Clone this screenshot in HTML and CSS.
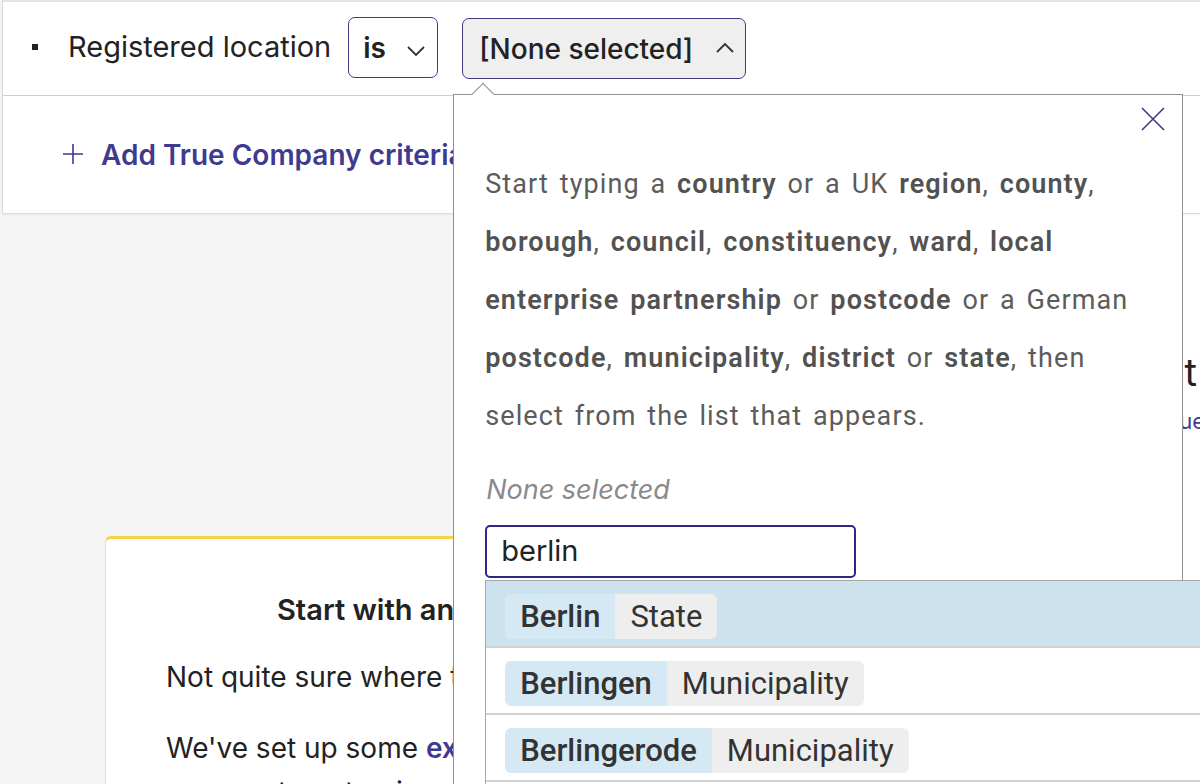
FILE: index.html
```html
<!DOCTYPE html>
<html lang="en">
<head>
<meta charset="utf-8">
<title>Registered location filter</title>
<link rel="stylesheet" href="styles.css">
</head>
<body>
<div class="page">
  <header class="criteria">
    <div class="row row-filter">
      <span class="bullet"></span>
      <span class="label">Registered location</span>
      <div class="select">
        <span>is</span>
        <svg class="chev" width="20" height="12" viewBox="0 0 20 12"><path d="M2 2 L10 10 L18 2" fill="none" stroke="#333" stroke-width="1.8"/></svg>
      </div>
      <div class="picker">
        <button class="picker-btn">
          <span>[None selected]</span>
          <svg class="chev" width="20" height="12" viewBox="0 0 20 12"><path d="M2 10 L10 2 L18 10" fill="none" stroke="#333" stroke-width="1.8"/></svg>
        </button>
        <div class="popover">
          <span class="arrow"></span>
          <button class="close" aria-label="Close">
            <svg width="24" height="24" viewBox="0 0 24 24"><path d="M1 1 L23 23 M23 1 L1 23" fill="none" stroke="#3d3a8c" stroke-width="1.6"/></svg>
          </button>
          <p class="hint">Start typing a <b>country</b> or a UK <b>region</b>, <b>county</b>, <b>borough</b>, <b>council</b>, <b>constituency</b>, <b>ward</b>, <b>local enterprise partnership</b> or <b>postcode</b> or a German <b>postcode</b>, <b>municipality</b>, <b>district</b> or <b>state</b>, then select from the list that appears.</p>
          <p class="none">None selected</p>
          <div class="search">
            <input class="input" type="text" value="berlin">
            <ul class="results">
              <li class="item active"><span class="chip"><span class="name">Berlin</span><span class="type">State</span></span></li>
              <li class="item"><span class="chip"><span class="name">Berlingen</span><span class="type">Municipality</span></span></li>
              <li class="item"><span class="chip"><span class="name">Berlingerode</span><span class="type">Municipality</span></span></li>
              <li class="item"><span class="chip"><span class="name">Berlinchen</span><span class="type">Municipality</span></span></li>
            </ul>
          </div>
        </div>
      </div>
    </div>
    <div class="row row-add">
      <span class="plus">
        <svg width="20" height="20" viewBox="0 0 20 20"><path d="M10 0 V20 M0 10 H20" fill="none" stroke="#3f3a8f" stroke-width="1.6"/></svg>
      </span>
      <a class="add-link" href="#">Add True Company criteria</a>
    </div>
  </header>
  <main class="main">
    <div class="left">
      <section class="card">
        <h3 class="card-title">Start with an example list</h3>
        <p class="card-text">Not quite sure where to start?</p>
        <p class="card-text">We've set up some <a href="#">example lists</a> that you can use to get going.</p>
      </section>
    </div>
    <div class="right">
      <h2 class="hero-title">Build your first list</h2>
      <a class="hero-link" href="#">Browse the catalogue</a>
    </div>
  </main>
</div>
</body>
</html>
```

FILE: styles.css
```css
* { box-sizing: border-box; }
html, body { margin: 0; padding: 0; }
body {
  width: 1200px;
  height: 784px;
  overflow: hidden;
  background: #f5f5f5;
  font-family: "Inter", "Liberation Sans", sans-serif;
  color: #222;
}
.page { width: 1200px; }

.criteria {
  margin-left: 2px;
  background: #fff;
  border-top: 2px solid #e3e3e3;
  border-left: 1px solid #dcdcdc;
  border-bottom: 1px solid #dedede;
  box-shadow: 0 1px 2px rgba(0,0,0,0.06);
  position: relative;
  z-index: 2;
}
.row { display: flex; align-items: center; }
.row-filter {
  height: 94px;
  border-bottom: 1px solid #cfcfcf;
  padding-left: 29px;
}
.bullet { width: 6px; height: 6px; background: #222; margin-top: -4px; }
.label { font-size: 29px; margin-left: 30px; margin-top: -4px; }

.select {
  margin-left: 17px;
  width: 90px;
  height: 61px;
  border: 1px solid #3d3a86;
  border-radius: 7px;
  display: flex;
  align-items: center;
  padding-left: 14px;
  font-size: 28px;
  font-weight: 600;
  margin-top: -2px;
}
.select .chev { margin-left: 20px; margin-top: 6px; }

.picker { position: relative; margin-left: 24px; }
.picker-btn {
  width: 284px;
  height: 61px;
  background: #efefef;
  border: 1px solid #3d3a86;
  border-radius: 7px;
  display: flex;
  align-items: center;
  padding: 0 0 0 16px;
  font-family: "Inter", sans-serif;
  font-size: 28px;
  font-weight: 500;
  color: #222;
}
.picker-btn .chev { margin-left: 22px; margin-top: -2px; }

.popover {
  position: absolute;
  left: -9px;
  top: 76px;
  width: 730px;
  height: 720px;
  background: #fff;
  border: 1px solid #909090;
  padding: 60px 31px 0 31px;
  font-family: "Roboto", "Liberation Sans", sans-serif;
  z-index: 5;
}
.arrow {
  position: absolute;
  left: 21px;
  top: -9px;
  width: 16px;
  height: 16px;
  background: #fff;
  border-left: 1px solid #909090;
  border-top: 1px solid #909090;
  transform: rotate(45deg);
}
.close {
  position: absolute;
  right: 17px;
  top: 12px;
  padding: 0;
  border: 0;
  background: none;
  width: 24px;
  height: 24px;
}
.close svg { display: block; }
.hint {
  margin: 0;
  width: 665px;
  font-size: 27px;
  line-height: 58px;
  letter-spacing: 1.1px;
  word-spacing: 3px;
  color: #5c5c5c;
}
.hint b { font-weight: 600; color: #525252; }
.none {
  margin: 25px 0 0 1px;
  font-family: "Inter", sans-serif;
  font-style: italic;
  font-size: 27px;
  line-height: 39px;
  color: #8a8a8a;
}
.search { position: relative; margin-top: 16px; width: 371px; }
.input {
  display: block;
  width: 371px;
  height: 53px;
  border: 2px solid #2c2884;
  border-radius: 5px;
  padding: 0 0 2px 14px;
  font-family: "Inter", sans-serif;
  font-size: 29px;
  color: #222;
  outline: none;
  background: #fff;
}
.results {
  position: absolute;
  left: 0;
  top: 55px;
  width: 760px;
  margin: 0;
  padding: 0;
  list-style: none;
  border-top: 1px solid #a8a8a8;
  border-left: 1px solid #a8a8a8;
  background: #fff;
}
.item {
  height: 67px;
  padding: 13px 0 0 19px;
  border-bottom: 2px solid #d3d3d3;
}
.item.active { background: #cce3ed; }
.chip {
  display: inline-flex;
  height: 45px;
  border-radius: 6px;
  overflow: hidden;
  font-size: 31px;
  color: #333;
}
.chip .name, .chip .type {
  display: flex;
  align-items: center;
  padding: 0 15px;
}
.chip .name { background: #d5e9f5; font-weight: 500; }
.chip .type { background: #eeeeee; }

.row-add {
  height: 117px;
  padding-left: 60px;
}
.plus { display: flex; margin-top: -2px; }
.add-link {
  margin-left: 18px;
  font-size: 28px;
  font-weight: 600;
  color: #3f3a8f;
  text-decoration: none;
}

.main { display: flex; height: 571px; }
.left { width: 800px; padding: 322px 0 0 105px; }
.card {
  width: 686px;
  height: 300px;
  background: #fff;
  border-top: 3px solid #f4d24a;
  border-left: 1px solid #dddddd;
  border-radius: 6px 6px 0 0;
  padding: 53px 60px 0 60px;
}
.card-title {
  margin: 0 0 0 111px;
  font-size: 29px;
  line-height: 36px;
  font-weight: 600;
  color: #222;
}
.card-text {
  margin: 27px 0 0 0;
  font-size: 28px;
  line-height: 44px;
  color: #222;
}
.card-text a { color: #3f3a8f; font-weight: 600; text-decoration: none; }

.right {
  flex: 1;
  background: #fff;
  text-align: right;
  padding-top: 135px;
  white-space: nowrap;
}
.hero-title {
  margin: 0;
  padding-right: 3px;
  font-size: 38px;
  line-height: 46px;
  font-weight: 400;
  color: #222;
}
.hero-link {
  display: block;
  margin-top: 10px;
  margin-right: -5px;
  font-size: 22px;
  line-height: 33px;
  color: #3f3a8f;
  text-decoration: none;
}
```
